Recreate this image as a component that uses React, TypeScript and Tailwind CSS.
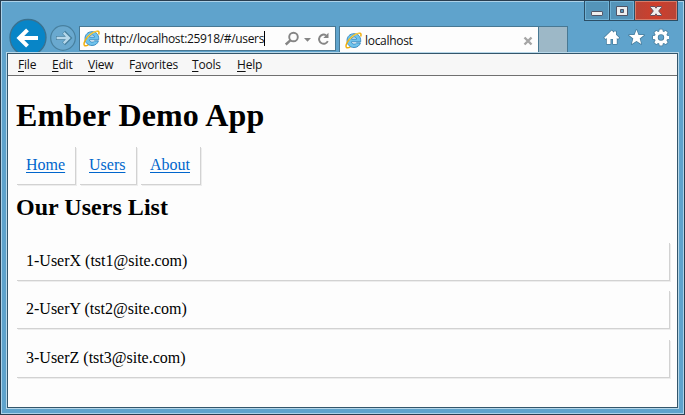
import React from "react";

const navItems = [
  { label: "Home", width: "w-[59px]" },
  { label: "Users", width: "w-[57px]" },
  { label: "About", width: "w-[60px]" },
];

const users = ["1-UserX (tst1@site.com)", "2-UserY (tst2@site.com)", "3-UserZ (tst3@site.com)"];

const menus = [
  { first: "", key: "F", rest: "ile", box: "w-[34px]" },
  { first: "", key: "E", rest: "dit", box: "w-[36px]" },
  { first: "", key: "V", rest: "iew", box: "w-[41px]" },
  { first: "F", key: "a", rest: "vorites", box: "w-[63px]" },
  { first: "", key: "T", rest: "ools", box: "w-[45px]" },
  { first: "", key: "H", rest: "elp", box: "w-[40px]" },
];

function ExplorerLogo() {
  return (
    <svg width="17" height="17" viewBox="0 0 17 17" className="shrink-0">
      <path fillRule="evenodd" d="M9 1.700c4.200 0 6.700 2.800 6.700 7.100v1H6.400c.1 1.500 1.200 2.300 2.700 2.300 1.200 0 2-.4 2.500-1.200h3.800c-.8 2.800-3.200 4.600-6.400 4.600-4.100 0-7-2.800-7-6.900s2.900-6.900 7-6.900zM6.500 7.100h5.100C11.400 5.700 10.500 5 9.100 5S6.800 5.700 6.500 7.100z" fill="#6fc3ec" stroke="#3386bd" strokeWidth=".9" />
      <path d="M15.700 4.500c.6-1.700.4-2.800-.6-3.200C12.700.5 7.400 3.700 4.200 7.500 1 11.400.3 15 1.800 15.700c.9.4 2.200 0 3.500-.8" fill="none" stroke="#f0b010" strokeWidth="1.500" />
      <path d="M14.400 1.500C11.700 1.200 7.300 4.100 4.400 7.600" fill="none" stroke="#ffe36c" strokeWidth=".7" />
    </svg>
  );
}

function NavButtons() {
  return (
    <svg width="71" height="36" viewBox="0 0 71 36" className="block shrink-0">
      <circle cx="20" cy="20.500" r="18" fill="#0885c7" stroke="#3a718f" strokeWidth="1.300" />
      <path d="M30 21H12M19.500 12.800L11.300 21l8.200 8.200" fill="none" stroke="#fff" strokeWidth="4" />
      <circle cx="55" cy="21" r="12.300" fill="#6aa9cf" stroke="#48809f" strokeWidth="1.200" />
      <path d="M48 21h12M55.700 15.200l5.800 5.800-5.800 5.800" fill="none" stroke="#48809f" strokeWidth="4.200" />
      <path d="M48.600 21h12M55.700 15.800l5.200 5.200-5.200 5.200" fill="none" stroke="#b6d8eb" strokeWidth="2.400" />
    </svg>
  );
}

function AddressIcons() {
  return (
    <svg width="46" height="18" viewBox="0 0 46 18" className="shrink-0">
      <circle cx="8.500" cy="7" r="4.300" fill="none" stroke="#858585" strokeWidth="1.900" />
      <path d="M5.300 10.300L.8 14.500" stroke="#858585" strokeWidth="2.400" />
      <path d="M19 8h7l-3.500 3.700z" fill="#858585" />
      <path d="M42.800 11.200A4.600 4.600 0 1 1 41 5.200" fill="none" stroke="#858585" strokeWidth="1.900" />
      <path d="M43.500 2.800v5.200h-5.200z" fill="#858585" />
    </svg>
  );
}

function ToolIcons() {
  return (
    <svg width="66" height="20" viewBox="0 0 66 20" className="block">
      <g fill="#fff" stroke="#487d9c" strokeWidth="1.500" strokeLinejoin="round" paintOrder="stroke">
        <path d="M1.200 9.700L8.700 2.500l2.300 2.200V3.500h2v3.200l3.200 3-1.200 1.200-1.200-1V16H10v-5H7.500v5H3.800V9.900l-1.200 1z" />
        <path d="M33.500 1.700l2 5.200 5.600.2-4.400 3.500 1.500 5.500-4.700-3.200-4.700 3.200 1.500-5.500-4.400-3.500 5.600-.2z" />
        <path fillRule="evenodd" d="M56.600 1.900h2.800l.4 2 1.100.5 1.800-1.200 2 2-1.200 1.800.5 1.100 2 .4v2.800l-2 .4-.5 1.100 1.200 1.800-2 2-1.800-1.200-1.100.5-.4 2h-2.800l-.4-2-1.100-.5-1.800 1.200-2-2 1.200-1.800-.5-1.100-2-.4V8.500l2-.4.5-1.100-1.200-1.800 2-2L55.100 4.400l1.100-.5zM58 6.700a3.200 3.200 0 1 0 0 6.400 3.200 3.200 0 0 0 0-6.400z" transform="translate(0 -.4)" />
      </g>
    </svg>
  );
}

function WindowButtons() {
  return (
    <div className="-mt-px flex h-5 w-[94px] gap-px border border-t-0 border-[#2b4e66] bg-[#2b4e66]">
      <button className="flex w-6 justify-center border border-[#70b1d4] bg-[#5494b9]">
        <svg width="16" height="18" viewBox="0 0 16 18" className="shrink-0"><rect x="2.500" y="9.500" width="11" height="4" rx=".6" fill="#eee" stroke="#505466" /></svg>
      </button>
      <button className="flex w-6 justify-center border border-[#70b1d4] bg-[#5494b9]">
        <svg width="16" height="18" viewBox="0 0 16 18" className="shrink-0"><path fillRule="evenodd" d="M2.500 4.500h11v9h-11zM6.500 7.500v3h3v-3z" fill="#eee" stroke="#505466" /></svg>
      </button>
      <button className="flex w-[42px] justify-center border border-[#d77b68] bg-linear-to-r from-[#b94436] via-[#cf3e2b] to-[#b94436]">
        <svg width="16" height="18" viewBox="0 0 16 18" className="shrink-0"><path d="M2.500 4.500H7l1 1.700 1-1.700h4.500v1L10.700 9l2.800 3.500v1H9L8 11.800 7 13.500H2.500v-1L5.300 9 2.500 5.500z" fill="#f0eded" stroke="#65505c" /></svg>
      </button>
    </div>
  );
}

export default function App() {
  return (
    <div className="flex h-[415px] w-[685px] flex-col overflow-hidden border border-[#293e50] bg-[#5fa3cc] font-['Open_Sans','Noto_Sans',sans-serif] text-xs text-[#111]">
      <div className="flex min-h-0 flex-1 flex-col border border-[#acd2e9]">
        <header className="flex h-[50px] shrink-0 justify-between pl-[6px]">
          <div className="flex pt-[15px]">
            <NavButtons />
            <div className="mt-[9px] flex h-[25px] w-[257px] items-center border border-[#487893] bg-[#fdfdfd] pl-[3px]">
              <ExplorerLogo />
              <span className="ml-1 w-[160px] whitespace-nowrap text-[12px] leading-5 tracking-[-0.33px]">http://localhost:25918/#/users</span>
              <span className="h-[15px] w-px bg-black" />
              <div className="ml-5 flex"><AddressIcons /></div>
            </div>
            <div className="ml-[3px] mt-[9px] flex h-[26px] w-[200px] items-center border border-b-0 border-[#487893] bg-[#fdfdfd] pl-[5px] pt-[2px]">
              <ExplorerLogo />
              <span className="ml-[3px] pt-px leading-5 tracking-[-0.3px]">localhost</span>
              <svg width="10" height="10" viewBox="0 0 10 10" className="ml-auto mr-[5px]"><path d="M1.500 1.500l7 7m0-7l-7 7" stroke="#a5a5a5" strokeWidth="2.400" /></svg>
            </div>
            <div className="mt-[9px] h-[26px] w-[29px] border border-b-0 border-l-0 border-[#487893] bg-[#9db8c7]" />
          </div>
          <div className="flex w-[99px] flex-col">
            <WindowButtons />
            <div className="ml-[19px] mt-[7px]"><ToolIcons /></div>
          </div>
        </header>

        <div className="mx-1 mb-1 flex min-h-0 flex-1 flex-col border border-[#b7d7e9]">
          <div className="flex min-h-0 flex-1 flex-col border border-[#34566b] bg-[#fdfdfd]">
            <nav className="flex h-[22px] shrink-0 items-center border-b border-[#707070] bg-[#f7f7f7] pl-[10px] pt-px leading-5">
              {menus.map((m) => (
                <span key={m.key} className={`${m.box} whitespace-nowrap tracking-[-0.2px]`}>
                  {m.first}<span className="underline underline-offset-2">{m.key}</span>{m.rest}
                </span>
              ))}
            </nav>
            <main className="px-2 font-['Liberation_Serif',serif] text-base text-black">
              <h1 className="mt-[21px] h-[37px] text-[32px] font-bold leading-[37px] tracking-[0.14px]">Ember Demo App</h1>
              <div className="mt-3 flex gap-1">
                {navItems.map((n) => (
                  <div key={n.label} className={`${n.width} h-[38px] px-2.5 pt-2.5 leading-[18px] shadow-[1px_1px_0_#d2d2d2,2px_2px_0_#ededed]`}>
                    <a href="#" className="text-[#0066cc] underline underline-offset-2">{n.label}</a>
                  </div>
                ))}
              </div>
              <h2 className="mt-[10px] h-[27px] text-2xl font-bold leading-[27px] tracking-[0.03px]">Our Users List</h2>
              <ul className="mt-[20.5px] flex w-[653px] flex-col gap-[10.5px]">
                {users.map((u) => (
                  <li key={u} className="h-[38px] px-2.5 pt-2.5 leading-[18px] shadow-[1px_1px_0_#d2d2d2,2px_2px_0_#ededed]">{u}</li>
                ))}
              </ul>
            </main>
          </div>
        </div>
      </div>
    </div>
  );
}
